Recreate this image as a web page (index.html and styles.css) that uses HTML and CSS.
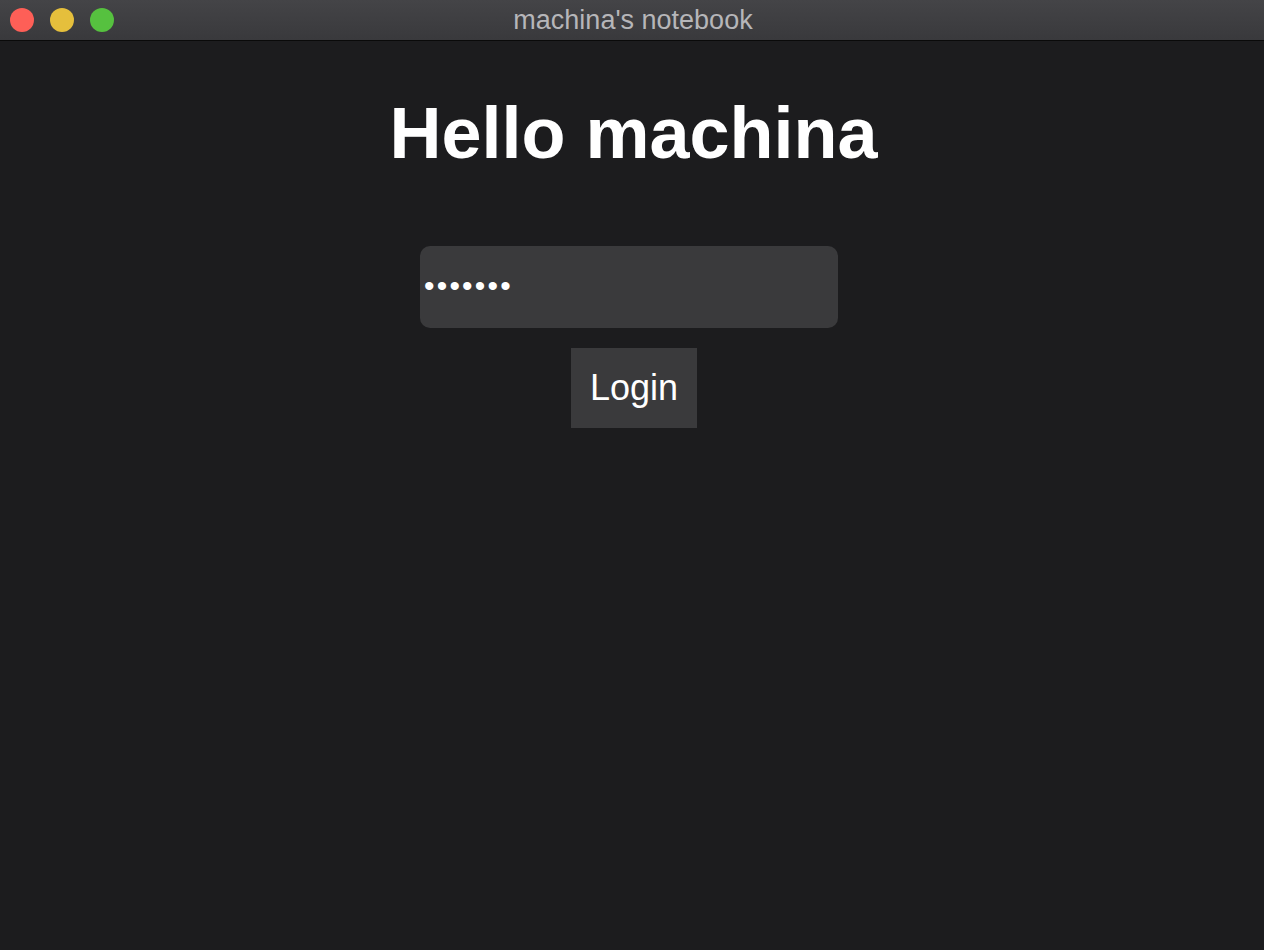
FILE: index.html
```html
<!DOCTYPE html>
<html>
<head>
<meta charset="utf-8">
<title>machina's notebook</title>
<link rel="stylesheet" href="styles.css">
</head>
<body>
<header class="titlebar">
  <div class="lights">
    <span class="light red"></span>
    <span class="light yellow"></span>
    <span class="light green"></span>
  </div>
  <div class="title">machina's notebook</div>
</header>
<main class="content">
  <h1 class="greeting">Hello machina</h1>
  <form class="login">
    <input class="password" type="password" value="1234567">
    <button class="btn" type="button">Login</button>
  </form>
</main>
</body>
</html>
```
FILE: styles.css
```css
html, body {
  margin: 0;
  padding: 0;
  height: 100%;
}
body {
  background: #1c1c1e;
  font-family: "Liberation Sans", Arial, sans-serif;
  color: #ffffff;
}
.titlebar {
  position: relative;
  height: 40px;
  background: linear-gradient(#444447, #39393c);
  border-bottom: 1px solid #0a0a0a;
  display: flex;
  align-items: center;
  justify-content: center;
}
.lights {
  position: absolute;
  left: 10px;
  top: 8px;
  display: flex;
  gap: 16px;
}
.light {
  width: 24px;
  height: 24px;
  border-radius: 50%;
  display: block;
}
.red { background: #fe5f57; }
.yellow { background: #e5bf3c; }
.green { background: #56c13f; }
.title {
  font-size: 27px;
  color: #b6b6b9;
  margin-left: 2px;
}
.content {
  display: flex;
  flex-direction: column;
  align-items: center;
}
.greeting {
  margin: 50px 0 0 3px;
  font-size: 72px;
  font-weight: bold;
  line-height: 84px;
}
.login {
  margin-top: 71px;
  display: flex;
  flex-direction: column;
  align-items: center;
  gap: 20px;
}
.password {
  box-sizing: border-box;
  width: 418px;
  height: 82px;
  border: none;
  outline: none;
  border-radius: 10px;
  background: #3a3a3c;
  color: #ffffff;
  font-family: "Liberation Sans", Arial, sans-serif;
  font-size: 30px;
  letter-spacing: 2.2px;
  padding: 0 0 2px 4px;
  margin: 0 6px 0 0;
}
.btn {
  box-sizing: border-box;
  width: 126px;
  height: 80px;
  border: none;
  border-radius: 0;
  background: #3a3a3c;
  color: #ffffff;
  font-family: "Liberation Sans", Arial, sans-serif;
  font-size: 36px;
  padding: 0;
  margin: 0 0 0 4px;
}
```
